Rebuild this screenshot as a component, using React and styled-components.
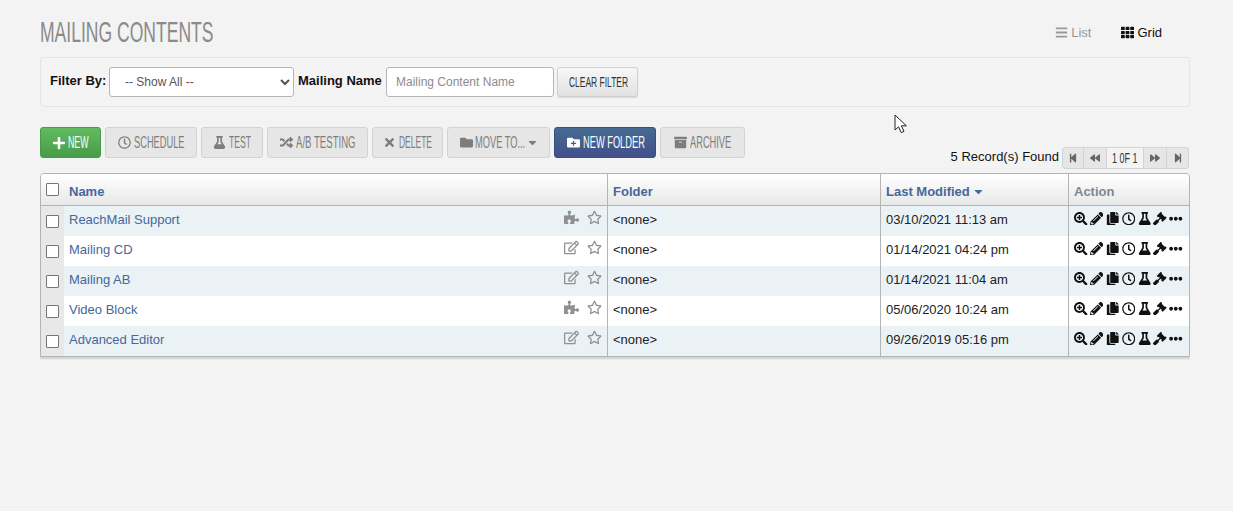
import React from 'react';
import styled, { createGlobalStyle } from 'styled-components';
import {
  FaArchive, FaBackward, FaBars, FaCaretDown, FaEllipsisH, FaFlask, FaFolder, FaFolderPlus, FaForward, FaGavel,
  FaPencilAlt, FaPlus, FaPuzzlePiece, FaRandom, FaRegClock, FaCopy, FaRegEdit, FaRegStar, FaSearchPlus,
  FaStepBackward, FaStepForward, FaTh, FaTimes,
} from 'react-icons/fa';

const GlobalStyle = createGlobalStyle`
  html, body { margin: 0; background: #f3f3f3; }
  body { font-family: "Liberation Sans", Arial, sans-serif; font-size: 13px; color: #111; }
  * { box-sizing: border-box; }
`;

const Page = styled.div`
  position: relative;
  width: 1150px;
  margin-left: 40px;
  height: 511px;
  overflow: hidden;
`;

// mouse pointer caught in the screenshot
const Pointer = styled.svg`
  position: absolute;
  left: 854px;
  top: 114px;
`;

const Header = styled.div`
  display: flex;
  justify-content: space-between;
  height: 57px;
`;

const Title = styled.h1`
  margin: 17px 0 0;
  font: 400 29px/31px "Liberation Sans", sans-serif;
  color: #8a8a8a;
  transform: scaleX(0.605);
  transform-origin: left center;
  white-space: nowrap;
`;

const Views = styled.div`
  display: flex;
  gap: 30px;
  padding: 25px 28px 0 0;
`;

const ViewLink = styled.a`
  display: flex;
  align-items: center;
  gap: 3px;
  height: 15px;
  font-size: 13px;
  color: ${p => (p.$active ? '#111' : '#999')};
  svg { font-size: 13px; }
`;

const FilterPanel = styled.div`
  display: flex;
  align-items: center;
  height: 50px;
  padding: 0 0 0 9px;
  background: #f4f4f4;
  border: 1px solid #e5e5e5;
  border-radius: 3px;
`;

const FilterLabel = styled.label`
  width: ${p => p.$w}px;
  font-weight: 700;
  font-size: 13px;
  position: relative;
  top: -2px;
  white-space: nowrap;
`;

const FilterSelect = styled.select`
  width: 185px;
  height: 30px;
  margin-right: 4px;
  padding: 0 11px;
  font: 12px "Liberation Sans", sans-serif;
  color: #555;
  background: #fff;
  border: 1px solid #b5b5b5;
  border-radius: 3px;
`;

const FilterInput = styled.input`
  width: 168px;
  height: 30px;
  margin-right: 3px;
  padding: 0 9px;
  font: 12px "Liberation Sans", sans-serif;
  background: #fff;
  border: 1px solid #b5b5b5;
  border-radius: 3px;
  &::placeholder { color: #8c8c8c; opacity: 1; }
`;

const Squeeze = styled.span`
  display: inline-block;
  flex: none;
  font-size: ${p => p.$size || 16}px;
  transform: scaleX(${p => p.$x || 0.58});
  transform-origin: left center;
  width: ${p => p.$w}px;
  white-space: nowrap;
`;

const ClearButton = styled.button`
  width: 81px;
  height: 30px;
  padding: 0 0 0 11px;
  text-align: left;
  font-family: "Liberation Sans", sans-serif;
  color: #333;
  background: linear-gradient(#f7f7f7, #e2e2e2);
  border: 1px solid #d0d0d0;
  border-radius: 3px;
  box-shadow: 0 1px 1px rgba(0, 0, 0, 0.12);
`;

const Toolbar = styled.div`
  display: flex;
  gap: 4px;
  margin-top: 20px;
  height: 31px;
`;

const ToolButton = styled.button`
  display: flex;
  align-items: center;
  justify-content: center;
  gap: ${p => p.$gap || 3}px;
  width: ${p => p.$w}px;
  height: 31px;
  padding: 0;
  font-family: "Liberation Sans", sans-serif;
  border-radius: 3px;
  color: ${p => (p.$kind ? '#fff' : '#7d7d7d')};
  border: 1px solid ${p => (p.$kind === 'green' ? '#4a9a4a' : p.$kind === 'blue' ? '#37507f' : '#d3d3d3')};
  background: ${p =>
    p.$kind === 'green'
      ? 'linear-gradient(#62bb60, #479c47)'
      : p.$kind === 'blue'
        ? 'linear-gradient(#466a91, #42508b)'
        : '#e6e6e6'};
  svg { flex: none; font-size: ${p => p.$icon || 13}px; }
`;

const ButtonCaret = styled(FaCaretDown)`
  width: 9px;
`;

const PagerRow = styled.div`
  display: flex;
  justify-content: flex-end;
  align-items: center;
  gap: 3px;
  height: 22px;
  margin: -11px 1px 0 0;
`;

const RecordCount = styled.span`
  font-size: 13px;
  color: #111;
  position: relative;
  top: -2px;
`;

const Pager = styled.div`
  display: flex;
  height: 22px;
  background: #e6e6e6;
  border: 1px solid #d3d3d3;
  border-radius: 3px;
`;

const PagerBtn = styled.span`
  display: flex;
  align-items: center;
  justify-content: center;
  width: ${p => p.$w}px;
  color: #666;
  border-right: 1px solid #d3d3d3;
  &:last-child { border-right: 0; }
  svg { font-size: 10px; }
`;

const PagerCurrent = styled.span`
  width: 37px;
  padding-left: 5px;
  line-height: 20px;
  color: #333;
  background: #f3f3f3;
  border-right: 1px solid #d3d3d3;
`;

const TableWrap = styled.div`
  margin-top: 4px;
  border: 1px solid #b4b4b4;
  border-radius: 4px 4px 0 0;
  box-shadow: 0 2px 2px rgba(0, 0, 0, 0.14);
  overflow: hidden;
`;

const Row = styled.div`
  display: grid;
  grid-template-columns: 566px 273px 188px 1fr;
  height: 30px;
  background: ${p => (p.$odd ? '#eaf2f6' : '#fff')};
`;

const HeadRow = styled(Row)`
  height: 32px;
  background: linear-gradient(#fff, #e8e8e8);
  border-bottom: 1px solid #b4b4b4;
`;

const HeadCell = styled.div`
  display: flex;
  align-items: center;
  gap: ${p => (p.$first ? 0 : 2)}px;
  padding: 3px 0 0 ${p => (p.$first ? 0 : 5)}px;
  font-weight: 700;
  font-size: 13px;
  color: ${p => (p.$muted ? '#7d8894' : '#46689a')};
  border-left: ${p => (p.$first ? '0' : '1px solid #b4b4b4')};
  svg { font-size: 13px; }
`;

const CheckCell = styled.div`
  display: flex;
  align-items: center;
  width: 23px;
  height: 100%;
  padding-left: 5px;
  margin-right: 5px;
  background: ${p => (p.$head ? 'transparent' : '#e8e8e8')};
`;

const Check = styled.span`
  display: block;
  width: 13px;
  height: 13px;
  margin-top: ${p => (p.$head ? -4 : 1)}px;
  background: #fff;
  border: 1px solid #767676;
  border-radius: 1px;
`;

const NameCell = styled.div`
  display: flex;
  align-items: center;
  font-size: 13px;
  color: #46689a;
`;

const NameText = styled.span`
  flex: 1;
  position: relative;
  top: -2px;
`;

const RowIcons = styled.span`
  display: flex;
  align-items: center;
  gap: 8px;
  padding-right: 5px;
  margin-top: -8px;
  font-size: 15px;
  color: #8f8f8f;
`;

const Cell = styled.div`
  display: flex;
  align-items: center;
  padding: 0 0 3px 5px;
  font-size: 13px;
  color: #222;
  border-left: 1px solid #b4b4b4;
`;

const ActionCell = styled(Cell)`
  gap: 2.4px;
  padding: 0 0 5px 5px;
  color: #111;
  svg { flex: none; font-size: 13.5px; }
`;

const rows = [
  ['ReachMail Support', 'puzzle', '03/10/2021 11:13 am'],
  ['Mailing CD', 'edit', '01/14/2021 04:24 pm'],
  ['Mailing AB', 'edit', '01/14/2021 11:04 am'],
  ['Video Block', 'puzzle', '05/06/2020 10:24 am'],
  ['Advanced Editor', 'edit', '09/26/2019 05:16 pm'],
];

export default function App() {
  return (
    <>
      <GlobalStyle />
      <Page>
        <Header>
          <Title>MAILING CONTENTS</Title>
          <Views>
            <ViewLink><FaBars /> List</ViewLink>
            <ViewLink $active><FaTh /> Grid</ViewLink>
          </Views>
        </Header>

        <FilterPanel>
          <FilterLabel $w={59}>Filter By:</FilterLabel>
          <FilterSelect defaultValue="all"><option value="all">-- Show All --</option></FilterSelect>
          <FilterLabel $w={88}>Mailing Name</FilterLabel>
          <FilterInput placeholder="Mailing Content Name" />
          <ClearButton><Squeeze $w={59} $x={0.604} $size={14}>CLEAR FILTER</Squeeze></ClearButton>
        </FilterPanel>

        <Toolbar>
          <ToolButton $kind="green" $w={61} $icon={14} $gap={2}><FaPlus /><Squeeze $w={21} $x={0.55}>NEW</Squeeze></ToolButton>
          <ToolButton $w={92}><FaRegClock /><Squeeze $w={50}>SCHEDULE</Squeeze></ToolButton>
          <ToolButton $w={62}><FaFlask /><Squeeze $w={22} $x={0.54}>TEST</Squeeze></ToolButton>
          <ToolButton $w={101}><FaRandom /><Squeeze $w={60} $x={0.6}>A/B TESTING</Squeeze></ToolButton>
          <ToolButton $w={71}><FaTimes /><Squeeze $w={33} $x={0.53}>DELETE</Squeeze></ToolButton>
          <ToolButton $w={103} $gap={2}><FaFolder /><Squeeze $w={51}>MOVE TO...</Squeeze><ButtonCaret /></ToolButton>
          <ToolButton $kind="blue" $w={102}><FaFolderPlus /><Squeeze $w={61}>NEW FOLDER</Squeeze></ToolButton>
          <ToolButton $w={85}><FaArchive /><Squeeze $w={42}>ARCHIVE</Squeeze></ToolButton>
        </Toolbar>

        <PagerRow>
          <RecordCount>5 Record(s) Found</RecordCount>
          <Pager>
            <PagerBtn $w={21}><FaStepBackward /></PagerBtn>
            <PagerBtn $w={23}><FaBackward /></PagerBtn>
            <PagerCurrent><Squeeze $w={26} $x={0.64} $size={14}>1 0F 1</Squeeze></PagerCurrent>
            <PagerBtn $w={23}><FaForward /></PagerBtn>
            <PagerBtn $w={21}><FaStepForward /></PagerBtn>
          </Pager>
        </PagerRow>

        <TableWrap>
          <HeadRow>
            <HeadCell $first>
              <CheckCell $head><Check $head /></CheckCell>Name
            </HeadCell>
            <HeadCell>Folder</HeadCell>
            <HeadCell>Last Modified <FaCaretDown /></HeadCell>
            <HeadCell $muted>Action</HeadCell>
          </HeadRow>
          {rows.map(([name, kind, modified], i) => (
            <Row key={name} $odd={i % 2 === 0}>
              <NameCell>
                <CheckCell><Check /></CheckCell>
                <NameText>{name}</NameText>
                <RowIcons>
                  {kind === 'puzzle' ? <FaPuzzlePiece /> : <FaRegEdit />}
                  <FaRegStar />
                </RowIcons>
              </NameCell>
              <Cell>&lt;none&gt;</Cell>
              <Cell>{modified}</Cell>
              <ActionCell>
                <FaSearchPlus /><FaPencilAlt /><FaCopy /><FaRegClock /><FaFlask /><FaGavel /><FaEllipsisH />
              </ActionCell>
            </Row>
          ))}
        </TableWrap>

        <Pointer width="14" height="20" viewBox="0 0 14 20">
          <path d="M1 1V16L4.6 12.8L7.2 18.6L10 17.4L7.4 11.8H12.4Z" fill="#fff" stroke="#222" strokeWidth="1" strokeLinejoin="round" />
        </Pointer>
      </Page>
    </>
  );
}
